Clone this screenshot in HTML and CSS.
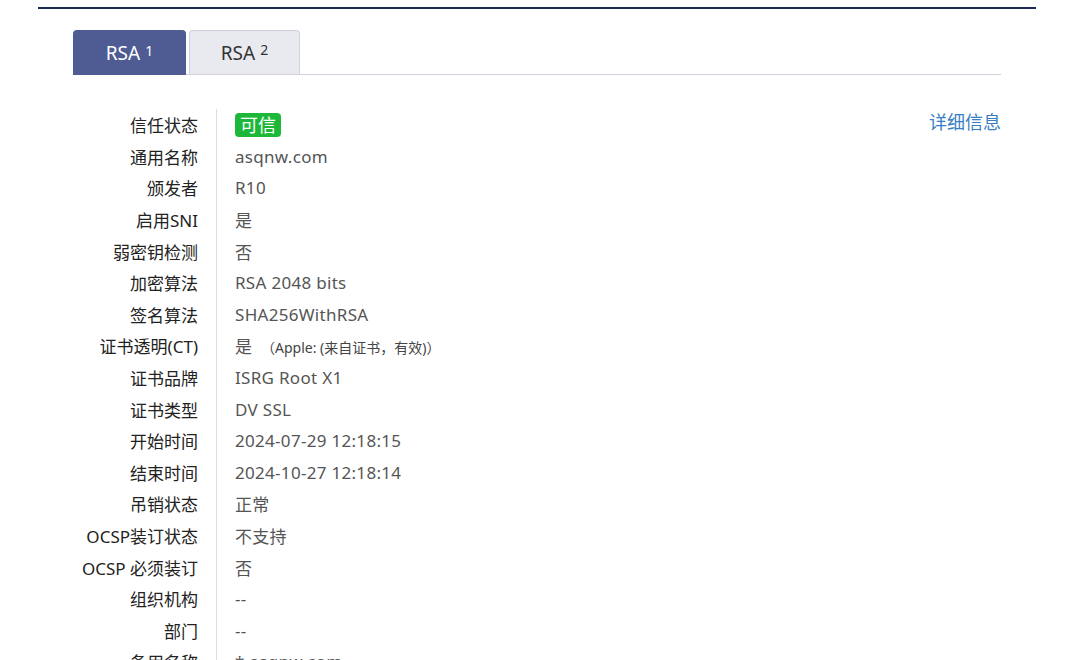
FILE: index.html
```html
<!DOCTYPE html>
<html lang="zh-CN">
<head>
    <meta charset="UTF-8">
    <meta name="viewport" content="width=device-width, initial-scale=1.0">
    <title>SSL证书信息</title>
    <link rel="stylesheet" href="styles.css">
</head>
<body>
    <div class="wrap">
        <div class="tabs">
            <div class="tab active">RSA <sup>1</sup></div>
            <div class="tab">RSA <sup>2</sup></div>
        </div>

        <div class="cert">
            <div class="info">
                <div class="row"><div class="label">信任状态</div><div class="value"><span class="badge">可信</span></div></div>
                <div class="row"><div class="label">通用名称</div><div class="value">asqnw.com</div></div>
                <div class="row"><div class="label">颁发者</div><div class="value">R10</div></div>
                <div class="row"><div class="label">启用SNI</div><div class="value">是</div></div>
                <div class="row"><div class="label">弱密钥检测</div><div class="value">否</div></div>
                <div class="row"><div class="label">加密算法</div><div class="value">RSA 2048 bits</div></div>
                <div class="row"><div class="label">签名算法</div><div class="value">SHA256WithRSA</div></div>
                <div class="row"><div class="label">证书透明(CT)</div><div class="value">是 <span class="note">（Apple: (来自证书，有效)）</span></div></div>
                <div class="row"><div class="label">证书品牌</div><div class="value">ISRG Root X1</div></div>
                <div class="row"><div class="label">证书类型</div><div class="value">DV SSL</div></div>
                <div class="row"><div class="label">开始时间</div><div class="value">2024-07-29 12:18:15</div></div>
                <div class="row"><div class="label">结束时间</div><div class="value">2024-10-27 12:18:14</div></div>
                <div class="row"><div class="label">吊销状态</div><div class="value">正常</div></div>
                <div class="row"><div class="label">OCSP装订状态</div><div class="value">不支持</div></div>
                <div class="row"><div class="label">OCSP 必须装订</div><div class="value">否</div></div>
                <div class="row"><div class="label">组织机构</div><div class="value">--</div></div>
                <div class="row"><div class="label">部门</div><div class="value">--</div></div>
                <div class="row"><div class="label">备用名称</div><div class="value">*.asqnw.com</div></div>
            </div>
            <a class="more" href="#">详细信息</a>
        </div>
    </div>
</body>
</html>
```

FILE: styles.css
```css
body {
    margin: 0;
    background: #fff;
    font-family: "Noto Sans", "Noto Sans CJK SC", sans-serif;
    color: #333;
    overflow: hidden;
}
.wrap {
    margin: 7px 46px 0 38px;
    border-top: 2px solid #1b2a55;
    padding: 21px 35px 0 35px;
}
.tabs {
    display: flex;
    gap: 3px;
    border-bottom: 1px solid #d3d0e2;
}
.tab {
    width: 111px;
    height: 44px;
    box-sizing: border-box;
    display: flex;
    align-items: center;
    justify-content: center;
    font-size: 19px;
    color: #333;
    background: #e9eaf0;
    border: 1px solid #cfd0de;
    border-bottom: none;
    border-radius: 4px 4px 0 0;
}
.tab.active {
    width: 113px;
    height: 45px;
    margin-bottom: -1px;
    background: #4e5c93;
    border-color: #4e5c93;
    color: #fff;
}
.tab sup {
    font-size: 14px;
    margin-left: 5px;
    position: relative;
    top: -3px;
}
.cert {
    display: flex;
    justify-content: space-between;
    align-items: flex-start;
    margin-top: 34px;
}
.row {
    display: flex;
    height: 31.6px;
    align-items: center;
    font-size: 17px;
}
.label {
    width: 125px;
    height: 100%;
    display: flex;
    align-items: center;
    justify-content: flex-end;
    padding-right: 18px;
    border-right: 1px solid #ddd;
    color: #222;
    white-space: nowrap;
}
.value {
    padding-left: 18px;
    color: #555;
    white-space: nowrap;
    letter-spacing: 0.3px;
}
.badge {
    display: inline-block;
    background: #1db83a;
    color: #fff;
    border-radius: 4px;
    padding: 0 5px;
    line-height: 24px;
    font-size: 18px;
    letter-spacing: 0;
}
.note {
    font-size: 14px;
    color: #444;
    margin-left: 4px;
    letter-spacing: 0;
}
.more {
    color: #3a7fc5;
    text-decoration: none;
    font-size: 18px;
    line-height: 24px;
    margin-top: 1px;
}
```
